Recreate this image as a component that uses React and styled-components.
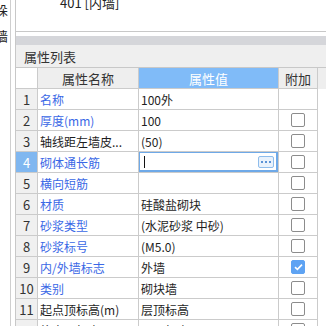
import React from 'react';
import styled, { createGlobalStyle } from 'styled-components';

const GlobalStyle = createGlobalStyle`
  html, body {
    margin: 0;
    padding: 0;
    background: #ffffff;
    overflow: hidden;
  }
  body {
    font-family: "Noto Sans CJK SC", "Noto Sans", sans-serif;
    font-size: 12px;
    color: #222;
  }
`;

const Page = styled.div`
  display: flex;
  width: 326px;
  height: 326px;
  overflow: hidden;
`;

const LeftStrip = styled.div`
  width: 10px;
  flex-shrink: 0;
  border-right: 1px solid #cfcfcf;
  overflow: hidden;
  display: flex;
  flex-direction: column;
  gap: 11px;
  padding-top: 2px;
`;

const SideChar = styled.div`
  font-size: 13px;
  line-height: 15px;
  margin-left: -5px;
  color: #222;
`;

const Panel = styled.div`
  flex: 1;
  margin-left: 4px;
  border-left: 1px solid #c8c8c8;
  display: flex;
  flex-direction: column;
  min-width: 0;
  & > * {
    flex-shrink: 0;
  }
`;

const TopBox = styled.div`
  height: 31px;
  border-bottom: 1px solid #c8c8c8;
  overflow: hidden;
`;

const TopLabel = styled.div`
  margin: -5px 0 0 44px;
  font-size: 13px;
  line-height: 16px;
`;

const GrayBar = styled.div`
  margin-top: 4px;
  height: 9px;
  background: #d5d6da;
`;

const TitleBand = styled.div`
  height: 22px;
  background: #efefef;
  border-bottom: 1px solid #c8c8c8;
  display: flex;
  align-items: center;
  padding-left: 8px;
  font-size: 13px;
  color: #333;
`;

const Row = styled.div`
  display: grid;
  grid-template-columns: 22px 101px 140px 39px 1fr;
  height: 21px;
  background: ${p => (p.$header ? '#eeeeee' : '#ffffff')};
`;

const Cell = styled.div`
  border-right: 1px solid #cbcbcb;
  border-bottom: 1px solid #cbcbcb;
  display: flex;
  align-items: center;
  overflow: hidden;
  white-space: nowrap;
  padding-left: 2px;
  font-size: 12px;
`;

const NumCell = styled(Cell)`
  justify-content: center;
  padding-left: 0;
  background: ${p => (p.$active ? '#80b7f0' : '#f0f0f0')};
  color: ${p => (p.$active ? '#ffffff' : '#333')};
  font-size: 13px;
`;

const CornerCell = styled(Cell)`
  background: #ffffff;
`;

const HeadCell = styled(Cell)`
  justify-content: center;
  padding-left: 0;
  font-size: 13px;
  background: ${p => (p.$active ? '#80bbf8' : '#eeeeee')};
  color: ${p => (p.$active ? '#ffffff' : '#333')};
`;

const NameCell = styled(Cell)`
  color: ${p => (p.$plain ? '#1e1e1e' : '#3a68e6')};
`;

const ValueCell = styled(Cell)`
  color: #1e1e1e;
`;

const EditCell = styled(Cell)`
  position: relative;
  padding-left: 0;
  justify-content: space-between;
  &::after {
    content: '';
    position: absolute;
    inset: -1px 0 0 -1px;
    border: 2px solid #6ea9e8;
    pointer-events: none;
  }
`;

const Caret = styled.div`
  width: 1px;
  height: 12px;
  background: #111;
  margin-left: 5px;
`;

const DotsButton = styled.div`
  width: 14px;
  height: 10px;
  margin-right: 4px;
  border: 1px solid #8fbdec;
  border-radius: 2px;
  background: #e9f2fc;
  display: flex;
  align-items: center;
  justify-content: center;
  gap: 2px;
  span {
    width: 2px;
    height: 2px;
    background: #5b93d6;
  }
`;

const CheckCell = styled(Cell)`
  justify-content: center;
  padding-left: 0;
`;

const Rest = styled.div`
  background: ${p => (p.$header ? '#eeeeee' : '#ffffff')};
`;

const Box = styled.div`
  width: 12px;
  height: 12px;
  border: 1px solid ${p => (p.$checked ? '#5ea3f3' : '#8c8c8c')};
  border-radius: 2px;
  background: ${p => (p.$checked ? '#5ea3f3' : '#ffffff')};
  display: flex;
  align-items: center;
  justify-content: center;
`;

const rows = [
  { name: '名称', value: '100外', box: false },
  { name: '厚度(mm)', value: '100' },
  { name: '轴线距左墙皮...', value: '(50)', plain: true },
  { name: '砌体通长筋', edit: true },
  { name: '横向短筋', value: '' },
  { name: '材质', value: '硅酸盐砌块' },
  { name: '砂浆类型', value: '(水泥砂浆 中砂)' },
  { name: '砂浆标号', value: '(M5.0)' },
  { name: '内/外墙标志', value: '外墙', checked: true },
  { name: '类别', value: '砌块墙' },
  { name: '起点顶标高(m)', value: '层顶标高', plain: true },
  { name: '终点顶标高(m)', value: '层顶标高', plain: true },
];

const Check = ({ checked }) => (
  <Box $checked={checked}>
    {checked && (
      <svg width="9" height="8" viewBox="0 0 9 8">
        <path d="M1 4.2 L3.4 6.4 L8 1.6" fill="none" stroke="#fff" strokeWidth="1.6" />
      </svg>
    )}
  </Box>
);

export default function App() {
  return (
    <Page>
      <GlobalStyle />
      <LeftStrip>
        <SideChar>垛</SideChar>
        <SideChar>墙</SideChar>
      </LeftStrip>
      <Panel>
        <TopBox>
          <TopLabel>401 [内墙]</TopLabel>
        </TopBox>
        <GrayBar />
        <TitleBand>属性列表</TitleBand>
        <Row $header>
          <CornerCell />
          <HeadCell>属性名称</HeadCell>
          <HeadCell $active>属性值</HeadCell>
          <HeadCell>附加</HeadCell>
          <Rest $header />
        </Row>
        {rows.map((r, i) => (
          <Row key={i}>
            <NumCell $active={r.edit}>{i + 1}</NumCell>
            <NameCell $plain={r.plain}>{r.name}</NameCell>
            {r.edit ? (
              <EditCell>
                <Caret />
                <DotsButton>
                  <span />
                  <span />
                  <span />
                </DotsButton>
              </EditCell>
            ) : (
              <ValueCell>{r.value}</ValueCell>
            )}
            <CheckCell>{r.box === false ? null : <Check checked={r.checked} />}</CheckCell>
            <Rest />
          </Row>
        ))}
      </Panel>
    </Page>
  );
}
